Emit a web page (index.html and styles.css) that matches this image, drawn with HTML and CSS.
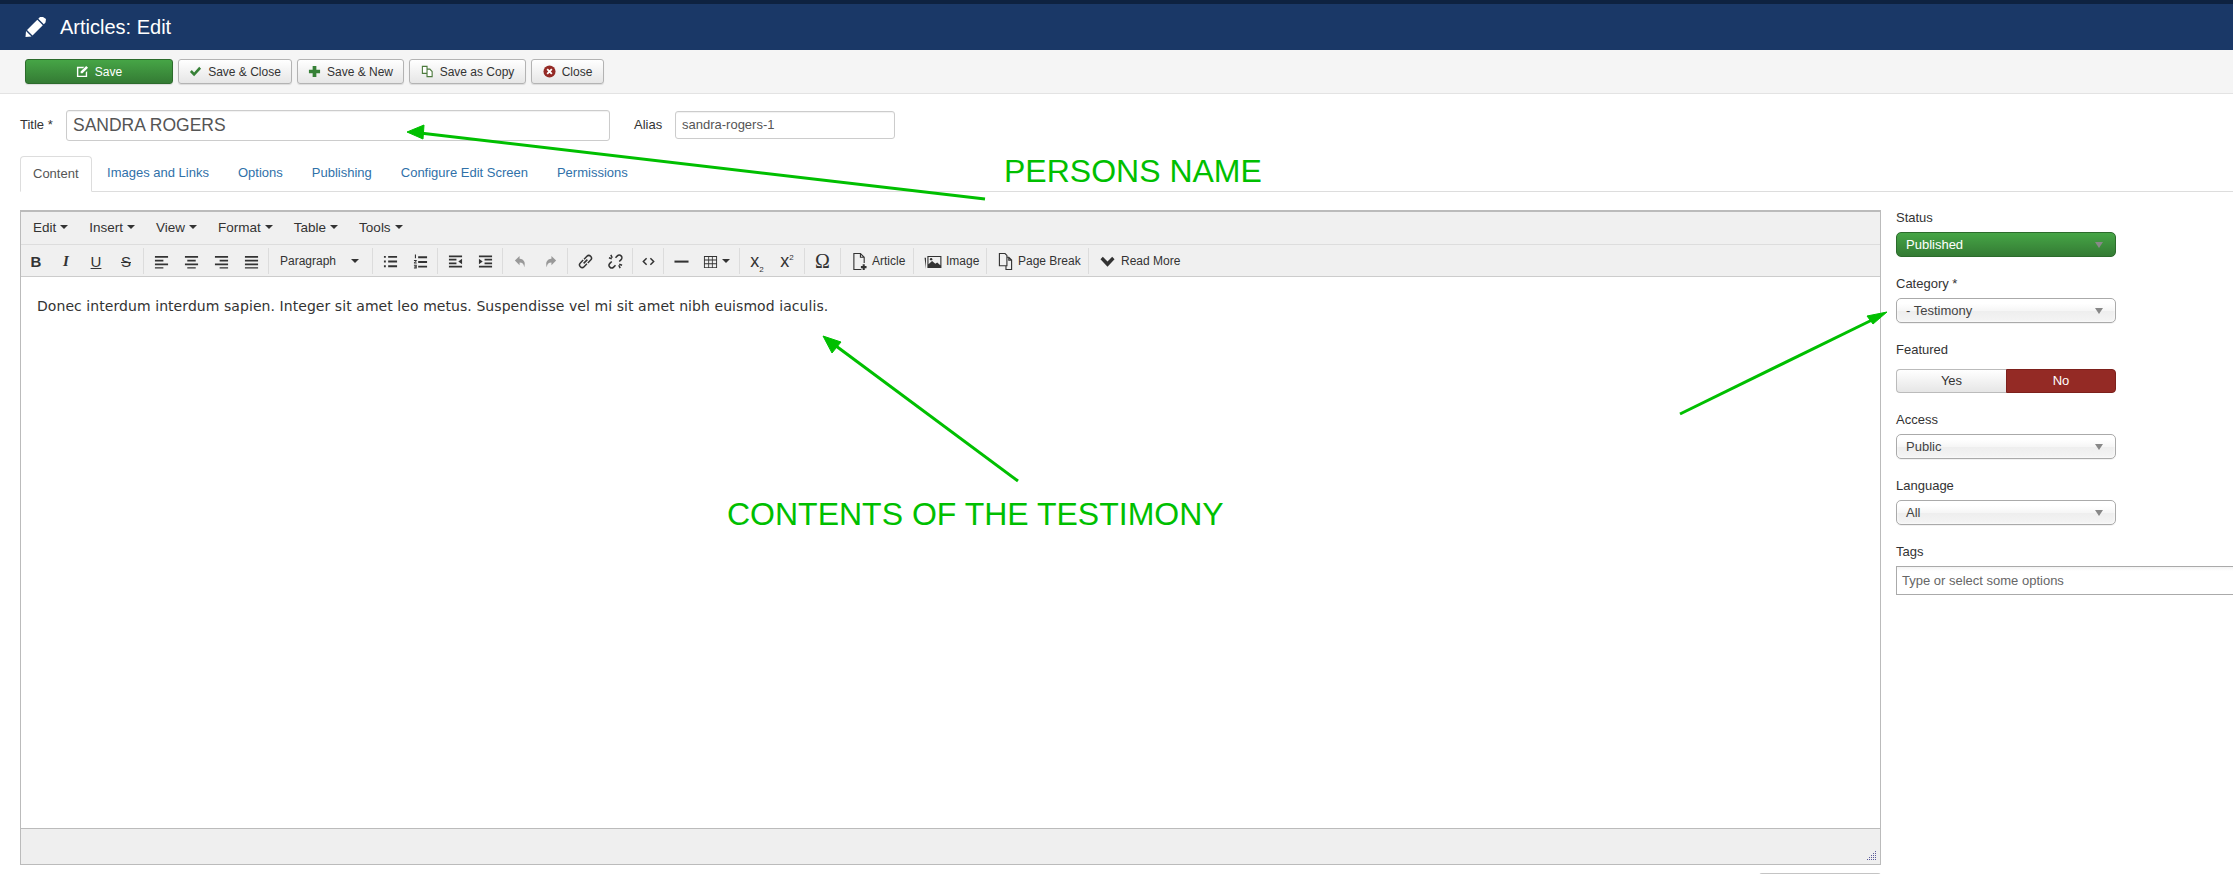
FILE: index.html
```html
<!DOCTYPE html>
<html lang="en">
<head>
<meta charset="utf-8">
<title>Articles: Edit</title>
<link rel="stylesheet" href="styles.css">
</head>
<body>
<header class="topbar">
  <svg class="page-icon" viewBox="0 0 21 20"><path d="M0.500 20L1 14l5.500 5.500zM2 13L12.300 2.700l5.500 5.500L7.500 18.500zM13.300 1.700L15 0h3l3 2-.5 3.500-1.700 1.700z" fill="#fff"/></svg>
  <h1 class="page-title">Articles: Edit</h1>
</header>

<nav class="actions">
  <button class="btn btn-save"><svg class="ico" viewBox="0 0 14 14"><path d="M1 2h8L7.500 3.500H2.500v8h8V8L12 6.500V13H1z" fill="#fff"/><path d="M5 7l6-6 2 2-6 6H5z" fill="#fff"/></svg>Save</button>
  <button class="btn w-close"><svg class="ico" viewBox="0 0 14 14"><path d="M1 7.500l2-2 2.500 2.500L11 2l2 2-7.500 8z" fill="#378137"/></svg>Save &amp; Close</button>
  <button class="btn w-new"><svg class="ico" viewBox="0 0 14 14"><path d="M5 1h4v4h4v4H9v4H5V9H1V5h4z" fill="#378137"/></svg>Save &amp; New</button>
  <button class="btn w-copy"><svg class="ico" viewBox="0 0 14 14"><path d="M1.500 1.500h5v7.500h-5zM6.500 4.500h3l2.500 2.500v5.500H6.500V9" fill="#fff" stroke="#4c7a3d" stroke-width="1.200"/></svg>Save as Copy</button>
  <button class="btn w-x"><svg class="ico" viewBox="0 0 14 14"><circle cx="7" cy="7" r="6.500" fill="#942a25"/><path d="M4.500 4.500l5 5M9.500 4.500l-5 5" stroke="#fff" stroke-width="2"/></svg>Close</button>
</nav>

<main class="content">
  <div class="title-row">
    <label class="lbl lbl-title">Title *</label>
    <div class="input input-title">SANDRA ROGERS</div>
    <label class="lbl lbl-alias">Alias</label>
    <div class="input input-alias">sandra-rogers-1</div>
  </div>

  <ul class="tabs">
    <li class="tab active">Content</li>
    <li class="tab">Images and Links</li>
    <li class="tab">Options</li>
    <li class="tab">Publishing</li>
    <li class="tab">Configure Edit Screen</li>
    <li class="tab">Permissions</li>
  </ul>

  <div class="columns">
    <section class="main-col">
      <div class="editor">
        <div class="menubar">
          <span class="menu">Edit<i class="caret"></i></span>
          <span class="menu">Insert<i class="caret"></i></span>
          <span class="menu">View<i class="caret"></i></span>
          <span class="menu">Format<i class="caret"></i></span>
          <span class="menu">Table<i class="caret"></i></span>
          <span class="menu">Tools<i class="caret"></i></span>
        </div>
        <div class="toolbar">
          <div class="grp first">
            <span class="tb g-b">B</span>
            <span class="tb g-i">I</span>
            <span class="tb g-u">U</span>
            <span class="tb g-s">S</span>
          </div>
          <div class="grp">
            <span class="tb"><svg class="ti" viewBox="0 0 16 16"><path d="M1 2h14v2H1zM1 6h9v2H1zM1 10h14v2H1zM1 14h9v1.500H1z"/></svg></span>
            <span class="tb"><svg class="ti" viewBox="0 0 16 16"><path d="M1 2h14v2H1zM3.500 6h9v2h-9zM1 10h14v2H1zM3.500 14h9v1.500h-9z"/></svg></span>
            <span class="tb"><svg class="ti" viewBox="0 0 16 16"><path d="M1 2h14v2H1zM6 6h9v2H6zM1 10h14v2H1zM6 14h9v1.500H6z"/></svg></span>
            <span class="tb"><svg class="ti" viewBox="0 0 16 16"><path d="M1 2h14v2H1zM1 6h14v2H1zM1 10h14v2H1zM1 14h14v1.500H1z"/></svg></span>
          </div>
          <div class="grp">
            <span class="listbox">Paragraph<i class="caret dark"></i></span>
          </div>
          <div class="grp">
            <span class="tb"><svg class="ti" viewBox="0 0 16 16"><path d="M1 2h2v2H1zM5.500 2H15v2H5.500zM1 7h2v2H1zM5.500 7H15v2H5.500zM1 12h2v2H1zM5.500 12H15v2H5.500z"/></svg></span>
            <span class="tb"><svg class="ti" viewBox="0 0 16 16"><path d="M5.500 2.500H15v2H5.500zM5.500 7.500H15v2H5.500zM5.500 12.500H15v2H5.500zM2 0.500h1.200v4H2zM1 6.500h3v1L2.200 9H4v1H1V9l1.800-1.500H1zM1 11.500h3v4H1v-1h2v-.5H1.500v-1H3v-.5H1z"/></svg></span>
          </div>
          <div class="grp">
            <span class="tb"><svg class="ti" viewBox="0 0 16 16"><path d="M1 1.500h14v2H1zM1 12.500h14v2H1zM1 5h8v2H1zM1 9h8v2H1zM15 5v6l-4-3z"/></svg></span>
            <span class="tb"><svg class="ti" viewBox="0 0 16 16"><path d="M1 1.500h14v2H1zM1 12.500h14v2H1zM7 5h8v2H7zM7 9h8v2H7zM1 5v6l4-3z"/></svg></span>
          </div>
          <div class="grp">
            <span class="tb"><svg class="ti off" viewBox="0 0 16 16"><path d="M7 2L2 7l5 5V9c3 0 4.500 1.500 5 5 1.500-5 0-8.500-5-9z"/></svg></span>
            <span class="tb"><svg class="ti off" viewBox="0 0 16 16"><path d="M9 2l5 5-5 5V9c-3 0-4.500 1.500-5 5-1.500-5 0-8.500 5-9z"/></svg></span>
          </div>
          <div class="grp">
            <span class="tb"><svg class="ti line" viewBox="0 0 16 16"><path d="M6 10l4-4M6.500 5.500l3-3a2.600 2.600 0 0 1 4 4l-3 3M9.500 10.500l-3 3a2.600 2.600 0 0 1-4-4l3-3"/></svg></span>
            <span class="tb"><svg class="ti line" viewBox="0 0 16 16"><path d="M8 4l2-2a2.500 2.500 0 0 1 4 4l-2 2M8 12l-2 2a2.500 2.500 0 0 1-4-4l2-2M3 1l1.500 3M1 4l3 1M13 15l-1.500-3M15 12l-3-1"/></svg></span>
          </div>
          <div class="grp">
            <span class="tb narrow"><svg class="ti line" viewBox="0 0 16 16"><path d="M6 4.500L2.500 8 6 11.500M10 4.500L13.500 8 10 11.500"/></svg></span>
          </div>
          <div class="grp">
            <span class="tb"><svg class="ti" viewBox="0 0 16 16"><path d="M0.500 7h15v2.200H.5z"/></svg></span>
            <span class="tb wide"><svg class="ti" viewBox="0 0 16 16"><path d="M1 2h14v13H1zM2 3.200v2.600h3.600V3.200zM6.500 3.200v2.600h3V3.200zM10.400 3.200v2.600H14V3.200zM2 6.800v3h3.600v-3zM6.500 6.800v3h3v-3zM10.400 6.800v3H14v-3zM2 10.800V14h3.600v-3.200zM6.500 10.800V14h3v-3.200zM10.400 10.800V14H14v-3.200z" fill-rule="evenodd"/></svg><i class="caret dark"></i></span>
          </div>
          <div class="grp">
            <span class="tb g-x"><span>x<sub>2</sub></span></span>
            <span class="tb g-x"><span>x<sup>2</sup></span></span>
          </div>
          <div class="grp">
            <span class="tb omega">Ω</span>
          </div>
          <div class="grp">
            <span class="tb-text w-article"><svg class="ti big line" viewBox="0 0 16 20"><path d="M10 18.500H2V1.500h7l4 4v6M9 1.500v4h4"/><path d="M12.500 13v6M9.500 16h6" stroke-width="2.200"/></svg>Article</span>
          </div>
          <div class="grp">
            <span class="tb-text w-image"><svg class="ti wide-ico" viewBox="0 0 18 16"><path d="M3 2h15v13H3zM4.200 3.200V11l3.800-3.500 3.500 3 2-1.500 3.300 3V3.200z" fill-rule="evenodd"/><path d="M0 4h1.500v12H15v-.1H1.500z"/><circle cx="7" cy="5.500" r="1.300"/></svg>Image</span>
          </div>
          <div class="grp">
            <span class="tb-text w-break"><svg class="ti big line" viewBox="0 0 16 20"><path d="M1.500 1.500h6l2 2v11h-8zM9.500 5.500h2l3 3v10h-6v-4M11.500 5.500v3h3"/></svg>Page Break</span>
          </div>
          <div class="grp">
            <span class="tb-text w-more"><svg class="ti" viewBox="0 0 16 16"><path d="M0.500 5.500L3 3l5 5 5-5 2.500 2.500L8 13.500z"/></svg>Read More</span>
          </div>
        </div>
        <div class="body-text">Donec interdum interdum sapien. Integer sit amet leo metus. Suspendisse vel mi sit amet nibh euismod iaculis.</div>
        <div class="statusbar">
          <svg class="grip" viewBox="0 0 10 10"><path d="M8 0h1v1H8zM6 2h1v1H6zM8 2h1v1H8zM4 4h1v1H4zM6 4h1v1H6zM8 4h1v1H8zM2 6h1v1H2zM4 6h1v1H4zM6 6h1v1H6zM8 6h1v1H8zM0 8h1v1H0zM2 8h1v1H2zM4 8h1v1H4zM6 8h1v1H6zM8 8h1v1H8z" fill="#5a5a9a"/></svg>
        </div>
      </div>
      <div class="below"></div>
    </section>

    <aside class="side">
      <label class="side-lbl">Status</label>
      <div class="select green">Published<i class="tri"></i></div>
      <label class="side-lbl">Category *</label>
      <div class="select">- Testimony<i class="tri"></i></div>
      <label class="side-lbl to-toggle">Featured</label>
      <div class="toggle"><span class="yes">Yes</span><span class="no">No</span></div>
      <label class="side-lbl">Access</label>
      <div class="select">Public<i class="tri"></i></div>
      <label class="side-lbl">Language</label>
      <div class="select">All<i class="tri"></i></div>
      <label class="side-lbl">Tags</label>
      <div class="tags">Type or select some options</div>
    </aside>
  </div>
</main>

<svg class="notes" viewBox="0 0 2233 874">
  <g stroke="#00bf00" stroke-width="3" fill="#00bf00">
    <path d="M985 199L420 133"/>
    <path d="M407 132l17-7-1 14z" stroke-width="1"/>
    <path d="M1018 481L832 343"/>
    <path d="M823 336l18 6-9 11z" stroke-width="1"/>
    <path d="M1680 414L1872 320"/>
    <path d="M1887 312l-20 4 6 8z" stroke-width="1"/>
  </g>
</svg>
<div class="note note-a">PERSONS NAME</div>
<div class="note note-b">CONTENTS OF THE TESTIMONY</div>
</body>
</html>
```

FILE: styles.css
```css
* { box-sizing: border-box; }
html, body { margin: 0; padding: 0; height: 874px; overflow: hidden; background: #fff; }
body { font-family: "Liberation Sans", Arial, sans-serif; font-size: 13px; color: #333; position: relative; }

.topbar { height: 50px; background: #1a3867; border-top: 4px solid #0e2240; display: flex; align-items: center; padding-left: 25px; }
.page-icon { width: 21px; height: 20px; margin-right: 14px; }
.page-title { margin: 0; font-size: 20px; font-weight: 400; color: #fff; line-height: 46px; }

.actions { height: 44px; background: #f5f5f5; border-bottom: 1px solid #e3e3e3; display: flex; gap: 5px; padding: 9px 0 0 25px; }
.btn { height: 25px; padding: 0; border: 1px solid #b3b3b3; border-radius: 3px; background: linear-gradient(#fff, #e6e6e6); font: 12px "Liberation Sans", Arial, sans-serif; color: #333; display: flex; align-items: center; justify-content: center; box-shadow: 0 1px 1px rgba(0,0,0,.1); }
.btn-save { width: 148px; background: linear-gradient(#46a546, #347b34); border-color: #2c6b2c; color: #fff; }
.w-close { width: 114px; }
.w-new { width: 107px; }
.w-copy { width: 117px; }
.w-x { width: 73px; }
.ico { width: 13px; height: 13px; margin-right: 6px; }

.content { padding: 0 0 0 20px; }
.title-row { display: flex; align-items: center; margin-top: 16px; height: 31px; }
.lbl { font-size: 13px; padding-bottom: 3px; }
.lbl-title { width: 46px; }
.lbl-alias { margin-left: 24px; width: 41px; }
.input { border: 1px solid #ccc; border-radius: 3px; color: #555; background: #fff; display: flex; align-items: center; box-shadow: inset 0 1px 1px rgba(0,0,0,.06); }
.input-title { width: 544px; height: 31px; font-size: 17.5px; padding-left: 6px; }
.input-alias { width: 220px; height: 28px; padding-left: 6px; margin-bottom: 2px; }

.tabs { list-style: none; margin: 15px 0 0; padding: 0; display: flex; height: 36px; border-bottom: 1px solid #ddd; }
.tab { padding: 0 14.500px; line-height: 34px; color: #3071a9; white-space: nowrap; }
.tab.active { color: #555; padding: 0 12px; margin-right: 1px; border: 1px solid #ddd; border-bottom-color: #fff; border-radius: 4px 4px 0 0; height: 36px; background: #fff; }

.columns { display: flex; margin-top: 18px; }
.main-col { width: 1861px; flex: none; }
.editor { height: 655px; border: 1px solid #bbb; border-top-width: 2px; display: flex; flex-direction: column; }
.menubar { height: 33px; background: #f0f0f0; border-bottom: 1px solid #ddd; display: flex; align-items: center; padding: 0 0 2px 12px; }
.menu { margin-right: 21px; display: flex; align-items: center; font-size: 13.500px; color: #333; white-space: nowrap; }
.caret { width: 0; height: 0; border: 4px solid transparent; border-top-color: #333; border-bottom: 0; margin-left: 4px; display: inline-block; }
.toolbar { height: 32px; background: #f0f0f0; border-bottom: 1px solid #ccc; display: flex; align-items: center; padding-top: 1px; }
.grp { display: flex; align-items: center; height: 26px; padding: 0 2px; border-left: 1px solid #dcdcdc; }
.grp.first { border-left: 0; padding-left: 0; }
.tb { width: 30px; height: 24px; display: flex; align-items: center; justify-content: center; color: #333; }
.tb.narrow { width: 26px; }
.tb.wide { width: 41px; }
.ti { width: 15px; height: 15px; fill: #333; }
.ti.off { fill: #999; }
.ti.line { fill: none; stroke: #333; stroke-width: 1.600; }
.ti.big { width: 15px; height: 19px; stroke-width: 1.200; margin-right: 5px; flex: none; }
.ti.wide-ico { width: 18px; height: 15px; margin-right: 4px; flex: none; }
.g-b { font-weight: 700; font-size: 15px; }
.g-i { font: italic 700 15px "Liberation Serif", serif; }
.g-u { text-decoration: underline; font-size: 15px; }
.g-s { text-decoration: line-through; font-size: 15px; }
.g-x { font-size: 18px; }
.g-x sub, .g-x sup { font-size: 8px; line-height: 0; }
.omega { width: 31px; font: 20px "Liberation Serif", serif; }
.listbox { width: 99px; display: flex; align-items: center; justify-content: space-between; padding: 0 11px 0 9px; font-size: 12px; color: #333; }
.tb-text { display: flex; align-items: center; font-size: 12px; white-space: nowrap; }
.w-article { width: 68px; padding-left: 9px; }
.w-image { width: 68px; padding-left: 8px; }
.w-break { width: 97px; padding-left: 9px; }
.w-more { width: 100px; padding-left: 9px; }
.w-more .ti { margin-right: 6px; }
.body-text { flex: 1; padding: 20px 16px 0; font: 14px/1.300 "DejaVu Sans", Verdana, sans-serif; letter-spacing: .065px; color: #333; background: #fff; }
.statusbar { height: 36px; background: #efefef; border-top: 1px solid #bbb; display: flex; justify-content: flex-end; align-items: flex-end; padding: 0 3px 3px 0; }
.grip { width: 10px; height: 10px; }
.below { width: 122px; height: 12px; margin: 8px 0 0 auto; border-top: 2px solid #c4c4c4; border-radius: 3px 3px 0 0; }

.side { margin-left: 15px; width: 400px; flex: none; }
.side-lbl { display: block; height: 18px; line-height: 18px; margin-bottom: 5px; font-size: 13px; color: #333; }
.side-lbl:first-child { margin-top: -1px; }
.side-lbl.to-toggle { margin-bottom: 10px; }
.select { position: relative; width: 220px; height: 25px; margin-bottom: 18px; padding-left: 9px; font-size: 13px; line-height: 23px; color: #444; border: 1px solid #aaa; border-radius: 5px; background: linear-gradient(#fff 20%, #f6f6f6 50%, #eee 52%, #f4f4f4); box-shadow: inset 0 0 3px #fff, 0 1px 0 rgba(0,0,0,.05); }
.select.green { color: #fff; border-color: #2c6b2c; background: linear-gradient(#46a546, #347b34); box-shadow: none; }
.tri { position: absolute; right: 12px; top: 9px; width: 0; height: 0; border: 4px solid transparent; border-top: 6px solid #888; border-bottom: 0; }
.toggle { display: flex; width: 220px; height: 24px; margin-bottom: 18px; line-height: 22px; text-align: center; font-size: 13px; }
.yes { width: 110px; border: 1px solid #bbb; border-right: 0; border-radius: 4px 0 0 4px; background: linear-gradient(#fff, #e6e6e6); }
.no { width: 110px; border: 1px solid #7d201c; border-radius: 0 4px 4px 0; background: #942a25; color: #fff; }
.tags { width: 400px; height: 29px; border: 1px solid #aaa; padding-left: 5px; line-height: 27px; font-size: 13px; color: #666; background: linear-gradient(#f4f4f4, #fff 15%); }

.notes { position: absolute; left: 0; top: 0; width: 2233px; height: 874px; pointer-events: none; }
.note { position: absolute; font-size: 32px; line-height: 36px; color: #00bf00; white-space: nowrap; }
.note-a { left: 1004px; top: 153px; }
.note-b { left: 727px; top: 496px; }
```
